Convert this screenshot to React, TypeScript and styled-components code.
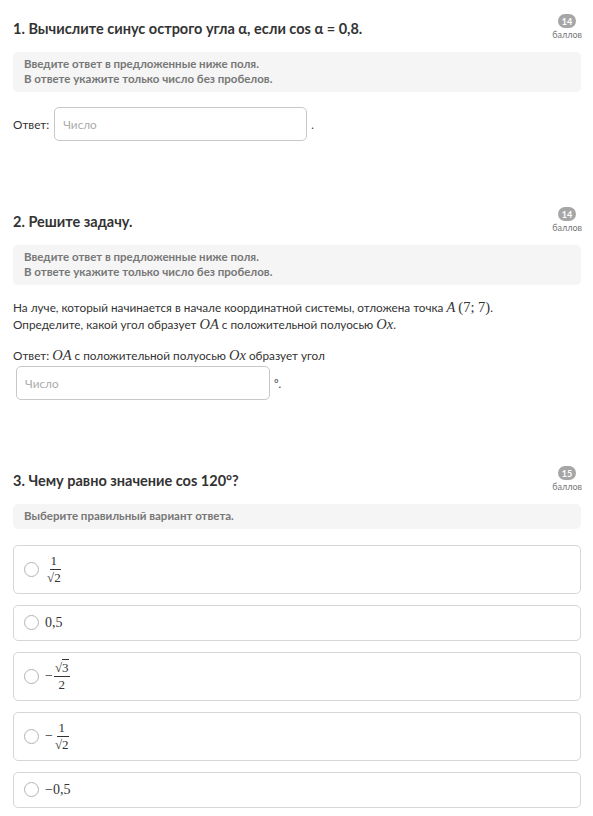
import React from 'react';
import styled, { createGlobalStyle } from 'styled-components';

const GlobalStyle = createGlobalStyle`
  body {
    margin: 0;
    background: #fff;
    font-family: Lato, "Open Sans", sans-serif;
    color: #333;
  }
`;

const Page = styled.div`
  width: 593px;
  padding: 0 12px 0 13px;
  box-sizing: border-box;
`;

const Task = styled.section<{ $gap: number }>`
  padding-top: 12px;
  margin-bottom: ${(p) => p.$gap}px;
`;

const Header = styled.div`
  display: flex;
  justify-content: space-between;
  align-items: flex-start;
  height: 40px;
`;

const Title = styled.h2`
  margin: 8px 0 0;
  font-size: 14.5px;
  font-weight: 700;
  color: #333;
`;

const Points = styled.div`
  display: flex;
  flex-direction: column;
  align-items: center;
  margin-top: 2px;
  margin-right: -1px;
`;

const Badge = styled.span`
  width: 18px;
  height: 14px;
  border-radius: 8px;
  background: #a6a6a6;
  color: #fff;
  font-size: 9px;
  font-weight: 700;
  display: flex;
  align-items: center;
  justify-content: center;
`;

const PointsLabel = styled.span`
  font-size: 9px;
  color: #777;
  margin-top: 1px;
`;

const Hint = styled.div<{ $single?: boolean }>`
  background: #f5f5f5;
  border-radius: 5px;
  padding: ${(p) => (p.$single ? '5px 11px' : '5px 11px 6px')};
  font-size: 11.5px;
  font-weight: 700;
  line-height: 14.5px;
  color: #777;
`;

const Text = styled.p<{ $top: number }>`
  margin: ${(p) => p.$top}px 0 0;
  font-size: 11.75px;
  line-height: 17px;
  color: #333;
`;

const AnswerRow = styled.div<{ $top: number }>`
  display: flex;
  align-items: center;
  margin-top: ${(p) => p.$top}px;
  font-size: 11.75px;
  color: #333;
`;

const Label = styled.span`
  margin-right: 5px;
`;

const Input = styled.input<{ $width: number; $left?: number }>`
  width: ${(p) => p.$width}px;
  height: 34px;
  margin-left: ${(p) => p.$left ?? 0}px;
  box-sizing: border-box;
  border: 1px solid #c8c8c8;
  border-radius: 5px;
  padding: 0 8px;
  font-family: Lato, sans-serif;
  font-size: 11.75px;
  color: #333;
  outline: none;
  &::placeholder {
    color: #aaa;
  }
`;

const Tail = styled.span`
  margin-left: 4px;
  font-size: 11px;
`;

const M = styled.span<{ $italic?: boolean }>`
  font-family: "Liberation Serif", "DejaVu Serif", serif;
  font-style: ${(p) => (p.$italic ? 'italic' : 'normal')};
  font-size: 14.5px;
  line-height: 1;
`;

const Options = styled.div`
  display: flex;
  flex-direction: column;
  gap: 11px;
  margin-top: 16px;
`;

const Option = styled.label<{ $tall?: boolean }>`
  display: flex;
  align-items: center;
  gap: 6px;
  height: ${(p) => (p.$tall ? 49 : 36)}px;
  box-sizing: border-box;
  border: 1px solid #d6d6d6;
  border-radius: 5px;
  padding-left: 10px;
  cursor: pointer;
`;

const Radio = styled.span`
  width: 13px;
  height: 13px;
  border-radius: 50%;
  border: 1px solid #b3b3b3;
  flex-shrink: 0;
`;

const MathVal = styled.span`
  display: inline-flex;
  align-items: center;
  font-family: "Liberation Serif", "DejaVu Serif", serif;
  font-size: 14px;
  color: #333;
`;

const Frac = styled.span`
  display: inline-flex;
  flex-direction: column;
  align-items: center;
  font-size: 13px;
  line-height: 14px;
  margin-left: 1px;
`;

const Num = styled.span`
  padding: 0 1px 1px;
  border-bottom: 1px solid #333;
`;

const Den = styled.span`
  padding: 1px 1px 0;
`;

const Radicand = styled.span`
  border-top: 1px solid #333;
`;

const Sqrt = ({ n }: { n: string }) => (
  <span>
    √<Radicand>{n}</Radicand>
  </span>
);

const PointsBox = ({ n }: { n: number }) => (
  <Points>
    <Badge>{n}</Badge>
    <PointsLabel>баллов</PointsLabel>
  </Points>
);

const InputHint = () => (
  <Hint>
    Введите ответ в предложенные ниже поля.
    <br />
    В ответе укажите только число без пробелов.
  </Hint>
);

const App: React.FC = () => (
  <Page>
    <GlobalStyle />

    <Task $gap={52}>
      <Header>
        <Title>1. Вычислите синус острого угла α, если cos α = 0,8.</Title>
        <PointsBox n={14} />
      </Header>
      <InputHint />
      <AnswerRow $top={15}>
        <Label>Ответ:</Label>
        <Input $width={253} placeholder="Число" />
        <Tail>.</Tail>
      </AnswerRow>
    </Task>

    <Task $gap={52}>
      <Header>
        <Title>2. Решите задачу.</Title>
        <PointsBox n={14} />
      </Header>
      <InputHint />
      <Text $top={14}>
        На луче, который начинается в начале координатной системы, отложена точка <M $italic>A</M>{' '}
        <M>(7; 7)</M>.
        <br />
        Определите, какой угол образует <M $italic>OA</M> с положительной полуосью <M $italic>Ox</M>.
      </Text>
      <Text $top={14}>
        Ответ: <M $italic>OA</M> с положительной полуосью <M $italic>Ox</M> образует угол
      </Text>
      <AnswerRow $top={2}>
        <Input $width={254} $left={3} placeholder="Число" />
        <Tail>°.</Tail>
      </AnswerRow>
    </Task>

    <Task $gap={0}>
      <Header>
        <Title>3. Чему равно значение cos 120°?</Title>
        <PointsBox n={15} />
      </Header>
      <Hint $single>Выберите правильный вариант ответа.</Hint>
      <Options>
        <Option $tall>
          <Radio />
          <MathVal>
            <Frac>
              <Num>1</Num>
              <Den>
                <Sqrt n="2" />
              </Den>
            </Frac>
          </MathVal>
        </Option>
        <Option>
          <Radio />
          <MathVal>0,5</MathVal>
        </Option>
        <Option $tall>
          <Radio />
          <MathVal>
            −
            <Frac>
              <Num>
                <Sqrt n="3" />
              </Num>
              <Den>2</Den>
            </Frac>
          </MathVal>
        </Option>
        <Option $tall>
          <Radio />
          <MathVal>
            −
            <Frac>
              <Num>1</Num>
              <Den>
                <Sqrt n="2" />
              </Den>
            </Frac>
          </MathVal>
        </Option>
        <Option>
          <Radio />
          <MathVal>−0,5</MathVal>
        </Option>
      </Options>
    </Task>
  </Page>
);

export default App;
